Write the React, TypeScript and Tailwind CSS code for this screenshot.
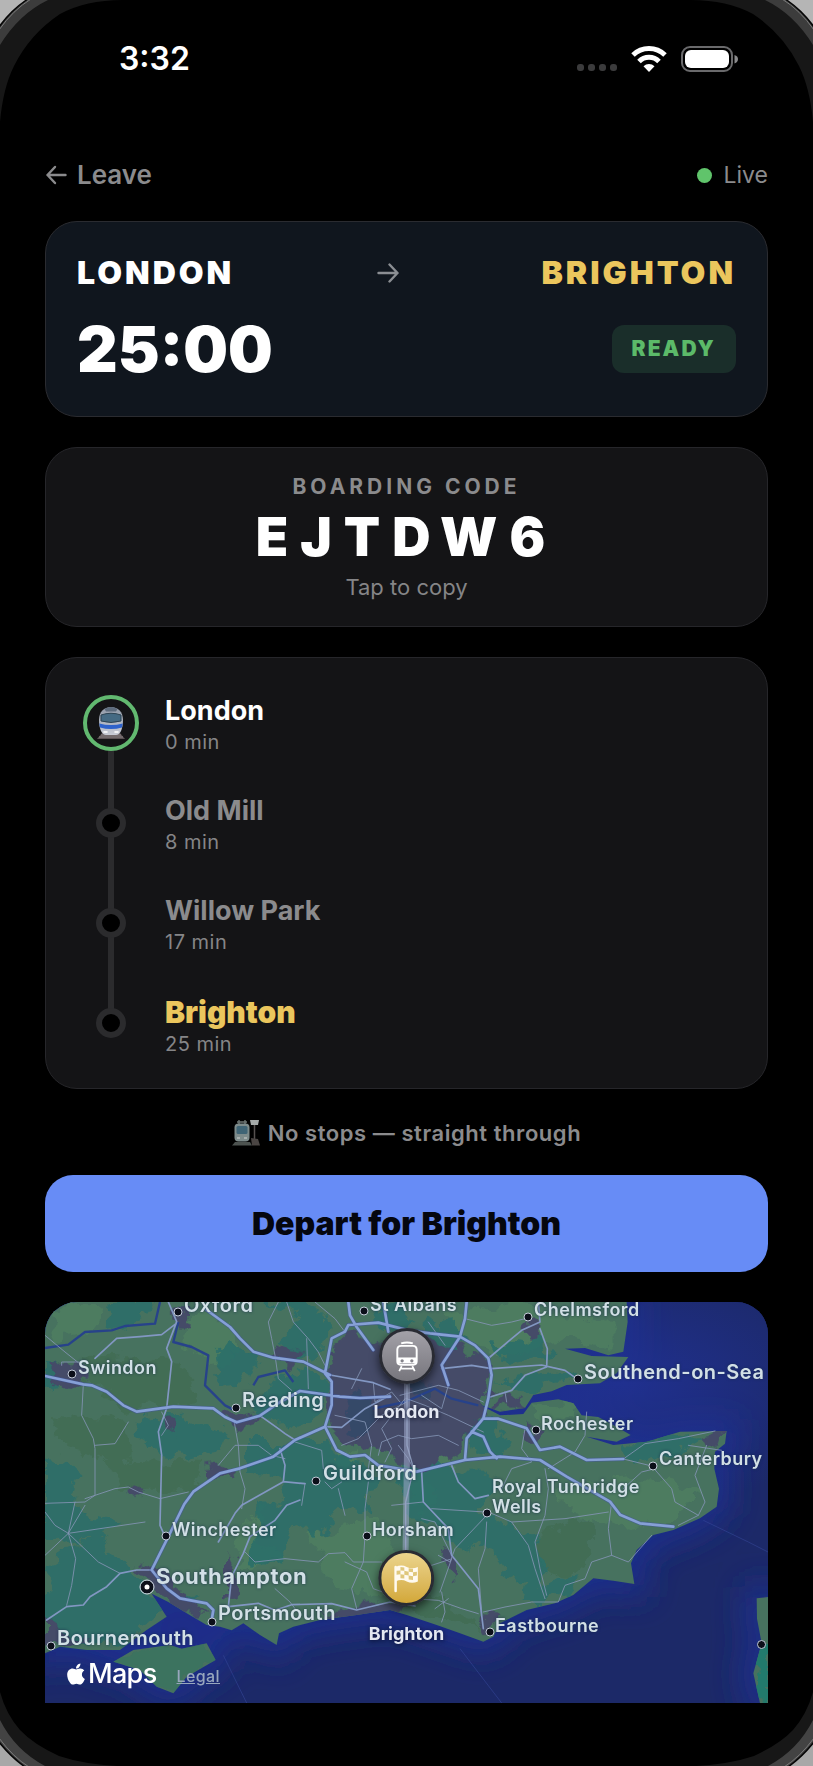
import { FaApple } from "react-icons/fa";

type Stop = { name: string; minutes: number; tone: string };

const stops: Stop[] = [
  { name: "London", minutes: 0, tone: "text-[27px] leading-8 font-bold text-white" },
  { name: "Old Mill", minutes: 8, tone: "text-[27px] leading-8 font-bold text-[#8b8b8d]" },
  { name: "Willow Park", minutes: 17, tone: "text-[27px] leading-8 font-bold text-[#8b8b8d]" },
  { name: "Brighton", minutes: 25, tone: "text-[30px] leading-[34px] font-black text-[#ebc65d]" },
];

type Place = { name: string; x: number; y: number; dot: [number, number]; style: string };

const small = "text-[18px] font-semibold tracking-wide";
const medium = "text-[20px] font-semibold tracking-wide";

/* Label and dot positions on the 723 x 401 map canvas. */
const places: Place[] = [
  { name: "Oxford", x: 139, y: 3, dot: [133, 10], style: medium },
  { name: "St Albans", x: 325, y: 3, dot: [319, 9], style: small },
  { name: "Chelmsford", x: 489, y: 8, dot: [483, 15], style: small },
  { name: "Swindon", x: 33, y: 66, dot: [27, 72], style: small },
  { name: "Southend-on-Sea", x: 539, y: 70, dot: [533, 77], style: medium },
  { name: "Reading", x: 197, y: 98, dot: [191, 106], style: medium },
  { name: "Rochester", x: 496, y: 122, dot: [491, 128], style: small },
  { name: "Canterbury", x: 614, y: 157, dot: [608, 164], style: small },
  { name: "Guildford", x: 278, y: 171, dot: [271, 179], style: medium },
  { name: "Royal Tunbridge\nWells", x: 447, y: 195, dot: [442, 211], style: small },
  { name: "Winchester", x: 127, y: 228, dot: [121, 234], style: small },
  { name: "Horsham", x: 327, y: 228, dot: [322, 234], style: small },
  { name: "Southampton", x: 111, y: 274, dot: [102, 285], style: "text-[22px] font-bold tracking-wide" },
  { name: "Portsmouth", x: 173, y: 311, dot: [167, 320], style: medium },
  { name: "Eastbourne", x: 450, y: 324, dot: [445, 330], style: small },
  { name: "Bournemouth", x: 12, y: 336, dot: [6, 344], style: medium },
];

const coast =
  "M0 0H1745L1748 60L1735 149L1690 160L1620 138L1560 140L1640 162L1750 165L1715 214L1665 244L1565 249L1520 268L1465 279L1440 318L1365 329L1300 306L1365 340L1435 336L1460 302L1540 292L1585 304L1610 340L1660 345L1705 369L1757 399L1715 419L1625 404L1705 429L1805 419L1905 389L2045 387L2040 425L2010 449L2008 500L2022 560L2015 614L1965 649L1885 684L1825 699L1775 744L1758 784L1768 846L1705 836L1645 829L1585 879L1530 904L1445 924L1365 964L1345 1004L1315 1019L1245 994L1175 969L1085 939L1035 924L935 939L825 954L745 974L702 994L695 1029L645 999L595 964L560 985L525 974L485 969L425 934L370 900L320 875L365 944L305 984L225 1044L125 1044L45 1034L0 1054Z";
const wight = "M205 1079L265 1044L375 1029L410 1040L485 1024L512 1074L425 1124L385 1174L335 1154L285 1104Z";
const france = "M2135 889L2169 885V1203H2145L2125 1114L2150 1024L2136 950Z";

const woods = [
  "M0 470L70 480L110 520L60 590L140 640L230 660L200 700L60 720L0 700Z",
  "M260 350L400 335L470 370L560 400L540 450L440 470L330 440L270 400Z",
  "M560 120L640 160L600 240L520 250L500 190Z",
  "M600 420L840 420L900 480L1000 520L980 640L880 620L820 700L760 660L700 540L600 520Z",
  "M640 0L760 40L700 120L760 170L840 150L850 70L780 0Z",
  "M620 330L720 380L830 330L860 260L780 200L680 240Z",
  "M20 770L150 700L230 760L290 830L350 920L240 1020L100 1030L0 980L0 880Z",
  "M640 600L780 590L830 640L740 700L700 790L610 780L640 700Z",
  "M1080 470L1180 480L1260 560L1200 650L1100 640L1060 580Z",
  "M1180 500L1320 500L1350 560L1290 620L1380 660L1470 700L1500 780L1470 860L1380 820L1330 740L1220 720L1160 640Z",
  "M1260 370L1340 350L1400 420L1360 470L1280 440Z",
  "M1340 120L1430 130L1480 90L1520 170L1400 190Z",
  "M1360 230L1450 220L1580 200L1560 240L1440 265Z",
  "M1730 420L1880 410L1990 400L1900 450L1800 490L1740 470Z",
  "M1140 60L1240 50L1260 130L1190 170L1130 130Z",
  "M1000 20L1060 0L1110 60L1030 90L960 60Z",
  "M400 860L470 890L420 930Z",
  "M1450 850L1600 820L1570 870L1500 900L1420 900Z",
  "M0 180L80 190L50 250L0 260Z",
  "M200 0L330 0L280 60L190 90Z",
];
const meadows = [
  "M10 20L180 10L150 90L40 110Z",
  "M430 40L560 60L600 140L520 200L420 120Z",
  "M870 460L930 440L900 520Z",
  "M560 700L660 610L640 720L720 760L600 800Z",
  "M800 690L1000 650L1060 760L1000 880L860 860Z",
  "M1190 30L1420 0L1520 40L1700 60L1700 140L1560 110L1400 160L1280 130Z",
  "M1460 300L1580 310L1590 350L1480 370Z",
  "M1140 450L1240 430L1230 500L1150 500Z",
  "M1520 560L1800 520L1960 560L1900 650L1760 680L1600 640Z",
  "M1100 520L1170 560L1160 620L1090 610Z",
];
const downs = [
  "M110 160L420 180L460 300L260 330L120 240Z",
  "M20 340L240 360L250 480L60 440Z",
  "M180 470L470 480L450 560L220 560Z",
  "M1480 680L1640 650L1640 770L1560 830L1480 790Z",
  "M1060 850L1200 900L1320 980L1200 970L1090 910Z",
];
const towns = [
  "M850 150L905 95L1010 130L1100 90L1200 130L1290 170L1330 230L1320 340L1250 410L1250 465L1120 500L1000 440L900 420L850 370L860 240Z",
  "M20 190L80 180L120 210L110 250L40 240Z",
  "M385 30L440 20L430 70L395 70Z",
  "M690 130L770 150L740 200L700 180Z",
  "M530 320L600 330L640 350L580 380L520 350Z",
  "M480 500L545 490L560 520L480 540Z",
  "M280 790L350 800L400 860L430 900L500 940L420 940L340 860Z",
  "M0 950L60 990L130 1020L0 1045Z",
  "M1430 60L1480 55L1480 95L1430 90Z",
  "M1240 130L1330 200L1340 290L1220 250Z",
  "M1440 370L1500 385L1480 410L1440 400Z",
  "M1305 930L1370 935L1330 1000Z",
  "M820 930L1000 900L1110 915L1060 935L900 950Z",
  "M1200 740L1240 770L1230 830L1190 800Z",
  "M1370 270L1440 290L1430 330L1350 320Z",
  "M540 770L580 780L575 880L540 900Z",
  "M1960 400L2045 388L2035 425L1990 440Z",
  "M250 565L280 550L290 580L260 600Z",
  "M350 340L400 360L390 390L350 370Z",
];

const rivers =
  "M0 138L70 128L120 90L200 85L240 72L330 65L345 0M400 60L385 120L440 135L490 160L480 250L540 310L570 325M625 250L640 225L720 205L745 240M985 320L1080 300L1170 260L1220 290L1300 310";

const motorways = [
  "M0 222L115 247L140 250L185 269L235 310L275 329L385 314L505 319L540 345L575 361L645 341L705 300L765 267L885 284L945 288L1035 284",
  "M485 24L555 75L585 109L625 149L685 167L775 179L855 219",
  "M840 214L860 109L900 89L910 69L1000 62L1090 85L1155 94L1245 104L1290 130L1330 169L1340 219L1330 289L1315 349L1265 409L1260 474L1115 509L1000 490L960 459L915 464L875 444L840 374L860 309L860 239Z",
  "M840 374L750 414L685 464L585 499L525 514L445 569L418 606L365 714L320 804",
  "M1265 0L1260 50L1245 104L1190 189L1210 249",
  "M910 0L915 40L935 75L985 144M1015 0L1030 89",
  "M1315 349L1360 350L1445 379L1485 444L1545 434L1625 474L1735 471",
  "M1260 474L1365 464L1485 474L1565 524L1695 599L1725 638L1785 664L1885 674",
  "M1280 389L1315 404L1335 449L1355 469",
  "M320 804L365 859L405 889L485 904L505 924L500 954",
];

const primary = [
  "M320 804L275 804L225 814L185 854L135 884L115 909L65 914L5 954",
  "M370 0L395 59L365 139L380 179L365 319L340 389L350 459L345 670L365 715",
  "M393 65L350 98L285 104L215 109L150 169",
  "M645 341L700 380L720 395L750 414M705 440L720 490L715 539L780 545M715 539L590 610L570 634L520 720",
  "M550 914L560 824L595 754L615 704L690 655L725 610L765 594",
  "M550 914L640 904L690 925L740 908L860 905L935 924L1035 900L1110 912",
  "M855 219L985 242L1035 262M840 374L890 376L960 320L1035 280",
  "M1190 200L1280 190L1340 200L1490 189L1560 205L1598 232",
  "M1335 165L1400 110L1430 85L1485 60L1480 0M1485 80L1507 140L1505 195L1440 220L1400 265L1335 285",
  "M1220 490L1240 540L1290 590L1330 580M1130 510L1135 600L1210 680L1220 760L1300 860L1315 980",
];

const lanes = [
  "M0 100L60 150L110 190M50 190L50 180L110 180M115 247L110 340L145 410L150 440L150 580L120 600L0 604M150 430L210 425L250 360",
  "M350 330L370 370L350 400M345 590L280 570L250 555L210 560L120 590M345 590L430 570M0 630L30 670L70 694L90 600M70 694L120 610M70 694L300 660M70 694L160 780L225 814M70 694L92 770L80 850L65 910M70 694L0 760",
  "M568 361L580 430L585 510L600 560L590 620M520 490L570 430L640 430L680 460L720 470",
  "M700 0L670 60L680 110L690 160L700 230L740 265M725 0L745 60L790 110L820 150L845 200M785 110L790 260M810 0L870 50L900 90",
  "M950 200L920 260M985 242L990 300L1040 270L1065 300M870 340L960 360L980 430L970 500M1000 460L1010 420L1060 400L1100 410L1180 400L1240 430",
  "M1085 300L1010 340L940 410L890 430M1080 290L1010 380L1040 440L1020 480M1085 290L1140 310L1210 340L1315 390M1065 280L1180 250L1240 265L1315 300M1130 280L1190 320L1210 250",
  "M750 420L830 445L835 500M780 545L770 610M880 560L900 640M960 700L955 780L920 860L935 920M900 780L965 810L985 860L1040 880M600 750L630 780L720 770L820 780L850 755L900 752L925 780L1010 780",
  "M970 540L960 620L960 700M1060 430L1090 470L1110 510M1135 600L1040 610M890 540L860 560L840 540",
  "M1160 620L1320 630M1325 640L1230 740L1215 780L1180 760M1220 770L1185 870M1325 660L1320 740L1300 800L1310 930M1110 780L1160 790L1215 772M1130 650L1170 660L1220 760",
  "M1400 660L1450 730L1470 800L1500 890M1330 630L1400 660L1560 650L1690 630M1500 500L1510 560L1500 640L1470 720L1485 800L1505 880",
  "M1315 930L1380 915L1460 900L1540 900L1560 850L1620 830L1640 780L1700 760L1690 680L1700 600M1700 760L1750 780L1820 700",
  "M1735 471L1800 425L1900 410L2010 387M1735 471L1820 492L1880 560L1890 600L1960 640L1900 670M1930 430L2030 445M1985 430L1950 520L1980 600L1960 640M1735 560L1790 510L1830 500",
  "M1510 500L1590 450L1620 400L1625 330M1440 380L1430 440L1460 480L1400 500L1370 560M1385 300L1380 270M1260 50L1340 70L1400 60L1440 50M1200 130L1150 60",
  "M1190 870L1200 930L1190 960M1100 890L1180 895L1250 920L1300 935M1170 920L1210 890M750 920L735 900L690 860",
];

function StatusIcons() {
  return (
    <div className="flex items-center gap-3.5">
      <span className="flex gap-1 pt-4" aria-hidden="true">
        {[0, 1, 2, 3].map((dot) => (
          <i key={dot} className="size-[7px] rounded-[3px] bg-[#3b3b3c]" />
        ))}
      </span>
      <svg viewBox="0 0 36 26" className="h-[26px] w-9" fill="none" stroke="white" role="img" aria-label="Wi-Fi">
        <path d="M2 9A23 23 0 0 1 34 9" strokeWidth="5" />
        <path d="M8 15.500A14 14 0 0 1 28 15.500" strokeWidth="5" />
        <path d="M18 26L12.500 20.300A8 8 0 0 1 23.500 20.300Z" fill="white" stroke="none" />
      </svg>
      <svg viewBox="0 0 57 26" className="h-[26px] w-[57px]" role="img" aria-label="Battery full">
        <rect x="1" y="1" width="50" height="24" rx="8" fill="none" stroke="#6a6a6c" strokeWidth="2" />
        <rect x="4" y="4" width="44" height="18" rx="6" fill="white" />
        <path d="M53.500 9Q57 10 57 13T53.500 17.500Z" fill="#8a8a8c" />
      </svg>
    </div>
  );
}

function Arrow({ className, flip = false }: { className: string; flip?: boolean }) {
  return (
    <svg viewBox="0 0 22 20" className={className} fill="none" stroke="currentColor" strokeWidth="2.400" strokeLinecap="round" strokeLinejoin="round" aria-hidden="true">
      <path d={flip ? "M20.500 10H2.500M10 2L2.500 10L10 18" : "M1.500 10H20.500M12.500 1.500L20.500 10L12.500 18.500"} />
    </svg>
  );
}

function MetroGlyph() {
  return (
    <svg viewBox="0 0 30 34" className="h-[34px] w-[30px]" aria-hidden="true">
      <defs>
        <linearGradient id="metroBody" x1="0" x2="0" y1="0" y2="1">
          <stop offset="0" stopColor="#8f98a6" />
          <stop offset="1" stopColor="#c9ccd6" />
        </linearGradient>
      </defs>
      <path d="M6 27H24L29 33H1Z" fill="#5b5254" />
      <path d="M3 31H27M5 29H25" stroke="#8d8486" strokeWidth="1" />
      <path d="M15 1C22 1 27 6 27 14C27 23 24 29 20 29H10C6 29 3 23 3 14C3 6 8 1 15 1Z" fill="url(#metroBody)" />
      <path d="M8.500 3Q15 -1 21.500 3L20 5.500H10Z" fill="#5d6b7c" />
      <path d="M5 9Q15 5.500 25 9L25 15Q15 18 5 15Z" fill="#456a83" stroke="#2d4353" strokeWidth="1" />
      <path d="M3.300 17.500Q15 20.500 26.700 17.500L26 21.500Q15 24.500 4 21.500Z" fill="#2e62cb" />
      <path d="M8 26H11M19 26H22" stroke="#fff" strokeWidth="1.600" strokeLinecap="round" />
    </svg>
  );
}

function StationGlyph() {
  return (
    <svg viewBox="0 0 28 26" className="h-[26px] w-7" aria-hidden="true">
      <path d="M3 22H18L20 25.500H0Z" fill="#4d5350" />
      <path d="M5 2H15M7 0V4M13 0V4" stroke="#6f7775" strokeWidth="1.400" />
      <rect x="2.500" y="3.500" width="15" height="18" rx="4" fill="#7d8b8b" />
      <rect x="4.500" y="6" width="11" height="8" rx="1.500" fill="#3f6475" />
      <path d="M5 18H8M12 18H15" stroke="#b5bcbb" strokeWidth="1.500" />
      <path d="M18 0H27L26 5H19Z" fill="#a5aaa9" />
      <path d="M22.500 5V20" stroke="#55504f" strokeWidth="1.500" />
      <path d="M19 18L26 19L28 25.500H20Z" fill="#4a4543" />
    </svg>
  );
}

function MapCanvas() {
  return (
    <svg viewBox="0 0 2169 1203" preserveAspectRatio="none" className="block size-full" aria-hidden="true">
      <defs>
        <clipPath id="landClip">
          <path d={coast} />
          <path d={wight} />
          <path d={france} />
        </clipPath>
        <filter id="ragged" x="-5%" y="-5%" width="110%" height="110%">
          <feTurbulence type="fractalNoise" baseFrequency="0.018" numOctaves="4" seed="7" />
          <feDisplacementMap in="SourceGraphic" scale="75" xChannelSelector="R" yChannelSelector="G" />
        </filter>
        <filter id="shore" x="-10%" y="-10%" width="120%" height="120%">
          <feGaussianBlur stdDeviation="48" />
        </filter>
        <radialGradient id="estuary" cx="0.8" cy="0.2" r="0.32">
          <stop offset="0" stopColor="#20308f" />
          <stop offset="1" stopColor="#20308f" stopOpacity="0" />
        </radialGradient>
      </defs>
      <rect width="2169" height="1203" fill="#1c2968" />
      <g fill="#1f2f8c" stroke="#1f2f8c" strokeWidth="70" filter="url(#shore)">
        <path d={coast} />
        <path d={wight} />
        <path d={france} />
      </g>
      <rect width="2169" height="1203" fill="url(#estuary)" />
      <g fill="#47725f">
        <path d={coast} />
        <path d={wight} />
        <path d={france} />
      </g>
      <g clipPath="url(#landClip)">
        <g filter="url(#ragged)">
          <path d={meadows.join("")} fill="#4d7c60" />
          <path d={downs.join("")} fill="#436d55" />
          <path d={woods.join("")} fill="#2b6f69" opacity="0.9" />
          <path d={wight} fill="#33735f" opacity="0.5" />
          <path d="M2130 1040H2169V1203H2120Z" fill="#237a6c" />
          <path d={towns.join("")} fill="#444b68" />
          <path d="M940 250L990 340L940 420L890 370ZM1100 215L1170 240L1140 290L1080 260Z" fill="#2e4a68" opacity="0.7" />
        </g>
        <path d={rivers} fill="none" stroke="#27428a" strokeWidth="7" strokeLinejoin="round" />
      </g>
      <g fill="none" stroke="#3a4ba0" strokeWidth="3" opacity="0.5">
        <path d="M535 1060L605 1203M1245 1040L1370 1203M1975 655L2110 720L2169 750" />
      </g>
      <g fill="none" strokeLinejoin="round" strokeLinecap="round">
        <path d={lanes.join("")} stroke="#8494b4" strokeWidth="3" opacity="0.85" />
        <path d={primary.join("")} stroke="#8297c2" strokeWidth="5" />
        <path d={motorways.join("")} stroke="#42579c" strokeWidth="12" opacity="0.6" />
        <path d={motorways.join("")} stroke="#86a0d6" strokeWidth="8" />
        <path d="M1086 250V430L1106 500L1082 600V790" stroke="#8796b6" strokeWidth="4" />
        <path d="M1086 200V450L1081 800" stroke="#9fa9cb" strokeWidth="18" opacity="0.55" />
      </g>
    </svg>
  );
}

function Pin({ label, spot, face, children }: { label: string; spot: string; face: string; children: React.ReactNode }) {
  return (
    <div className={`absolute flex -translate-x-1/2 flex-col items-center gap-4 ${spot}`}>
      <span className={`flex size-14 items-center justify-center rounded-full border-[3px] border-[#292b33] shadow-[0_4px_10px_rgba(0,0,0,0.6)] ${face}`}>
        {children}
      </span>
      <span className="text-[18px] leading-6 font-bold text-[#e4e8f2] [text-shadow:0_1px_4px_rgba(10,15,40,0.9)]">{label}</span>
    </div>
  );
}

function RouteMap() {
  return (
    <section aria-label="Route map" className="relative h-[401px] overflow-hidden rounded-t-[32px] bg-[#1c2a6c]">
      <MapCanvas />
      {places.map((place) => (
        <div key={place.name}>
          <i
            className={`absolute -translate-x-1/2 -translate-y-1/2 rounded-full ${place.name === "Southampton" ? "size-[13px] border-4 border-[#0c0f1a] bg-white outline outline-[#d5dbe8]" : "size-[9px] border border-[#c3cbd8] bg-[#0c0f1a]"}`}
            style={{ left: `${(place.dot[0] / 723) * 100}%`, top: place.dot[1] }}
          />
          <span
            className={`absolute -translate-y-1/2 leading-5 whitespace-pre text-[#d2e0e6] [text-shadow:0_0_3px_rgba(25,45,75,0.9)] ${place.style}`}
            style={{ left: `${(place.x / 723) * 100}%`, top: place.y }}
          >
            {place.name}
          </span>
        </div>
      ))}
      <i className="absolute right-[2px] bottom-[54px] size-[9px] rounded-full border border-[#c3cbd8] bg-[#0c0f1a]" />
      <Pin label="London" spot="left-1/2 top-[26px]" face="bg-linear-to-b from-[#a3a1a8] to-[#77767d]">
        <svg viewBox="0 0 24 32" className="h-[31px] w-6" fill="none" stroke="white" strokeWidth="2" aria-hidden="true">
          <path d="M6 2.500Q12 0.500 18 2.500M6 5H18Q22 5 22 9V21Q22 24.500 18.500 24.500H5.500Q2 24.500 2 21V9Q2 5 6 5Z" />
          <path d="M2.500 17H21.500V23H2.500Z" fill="white" stroke="none" />
          <circle cx="7" cy="20.500" r="1.700" fill="#85848b" stroke="none" />
          <circle cx="17" cy="20.500" r="1.700" fill="#85848b" stroke="none" />
          <path d="M6.500 26L4 31M17.500 26L20 31M5.500 28.500H18.500" strokeWidth="1.800" />
        </svg>
      </Pin>
      <Pin label="Brighton" spot="left-1/2 top-[248px]" face="bg-linear-to-b from-[#ebd48c] to-[#d3a838]">
        <svg viewBox="0 0 28 30" className="h-[29px] w-7" aria-hidden="true">
          <path d="M3 3V28" stroke="#fffaf0" strokeWidth="2.600" strokeLinecap="round" />
          <path d="M3 3Q9 0 14.500 3T26 3V18Q20 21 14.500 18T3 18Z" fill="#fffaf0" />
          <path d="M8 3L12 3.500V7L8 6.800ZM16.500 4.500L21 5V8.500L16.500 8ZM4 7L8 6.800V10.500L4 11ZM12 7L16.500 8V12L12 11ZM21 8.500L25 8V12L21 12.700ZM8 10.500L12 11V15L8 14.800ZM16.500 12L21 12.700V16.500L16.500 16Z" fill="#dfc77c" />
        </svg>
      </Pin>
      <div className="absolute bottom-[13px] left-[19px] flex items-center text-white">
        <FaApple className="size-6" aria-hidden="true" />
        <span className="text-[27px] leading-8 font-medium tracking-tight">Maps</span>
        <a href="#legal" className="pt-1 pl-5 text-[16px] leading-5 font-medium tracking-wide text-[#98a6bd] underline">Legal</a>
      </div>
    </section>
  );
}

function Bezel() {
  return (
    <div className="pointer-events-none absolute inset-0 overflow-hidden" aria-hidden="true">
      {["top-0 left-0", "top-0 right-0 -scale-x-100"].map((corner) => (
        <svg key={corner} viewBox="0 0 125 125" className={`absolute size-[125px] ${corner}`}>
          <path d="M0 0H122Q86 0 60 14Q30 34 14 66Q3 88 0 122Z" fill="#171717" />
          <path d="M0 0H48Q19 14 0 45Z" fill="#3c3c3c" />
          <path d="M0 0H28Q11 10 0 26Z" fill="#b5b5b5" />
          <path d="M28 -1Q11 10 -1 27" fill="none" stroke="#050505" strokeWidth="1.500" />
          <path d="M31 -1Q13 10 -1 30" fill="none" stroke="#7a7a7a" strokeWidth="1" />
        </svg>
      ))}
      {["bottom-0 left-0 -scale-x-100", "bottom-0 right-0"].map((corner) => (
        <svg key={corner} viewBox="0 0 125 80" className={`absolute h-20 w-[125px] ${corner}`}>
          <path d="M125 80H8Q42 78 66 70Q92 58 105 44Q119 28 125 6Z" fill="#171717" />
          <path d="M125 80H80Q110 64 125 34Z" fill="#434343" />
          <path d="M125 80H101Q114 71 125 57Z" fill="#a8a8a8" />
          <path d="M100 81Q114 71 126 56" fill="none" stroke="#050505" strokeWidth="1.500" />
          <path d="M96 81Q112 71 126 52" fill="none" stroke="#7a7a7a" strokeWidth="1" />
        </svg>
      ))}
    </div>
  );
}

export default function App() {
  return (
    <div className="relative min-h-screen bg-black pb-[63px] font-['Inter','Liberation_Sans',sans-serif] text-white">
      <Bezel />
      <div className="flex items-center justify-between pt-[39px] pr-[75px] pl-[119px]">
        <time className="text-[32px] leading-10 font-semibold">3:32</time>
        <StatusIcons />
      </div>

      <main className="px-[45px] pt-[78px]">
        <header className="flex items-center justify-between text-[#8b8b8d]">
          <button type="button" className="flex items-center gap-2.5 text-[26px] leading-9 font-semibold">
            <Arrow flip className="h-5 w-[22px]" />
            Leave
          </button>
          <p className="flex items-center gap-3 text-[23px] leading-9">
            <span className="size-[15px] rounded-full bg-[#60c46b]" />
            Live
          </p>
        </header>

        <div className="flex flex-col gap-[30px] pt-7">
          <section className="flex flex-col gap-5 rounded-[32px] border border-[#2a2b30] bg-[#10161e] px-[31px] pt-[31px] pb-[31px]">
            <div className="flex items-center justify-between text-[32px] leading-10 font-black tracking-[3px]">
              <h1>LONDON</h1>
              <Arrow className="h-5 w-[22px] text-[#8b8e93]" />
              <p className="text-[#ebc65d]">BRIGHTON</p>
            </div>
            <div className="flex items-center justify-between">
              <p className="text-[63px] leading-[72px] font-black">25:00</p>
              <p className="rounded-xl bg-[#1a2e2a] px-5 py-2 text-[21px] leading-8 font-black tracking-widest text-[#5cba69]">READY</p>
            </div>
          </section>

          <button type="button" className="flex flex-col items-center rounded-[32px] border border-[#26262a] bg-[#141416] pt-[27px] pb-[25px]">
            <span className="text-[21px] leading-6 font-bold tracking-[4px] text-[#8b8b8d]">BOARDING CODE</span>
            <span className="pt-1.5 text-[53px] leading-[64px] font-black tracking-[12px]">EJTDW6</span>
            <span className="pt-1 text-[22px] leading-7 text-[#858587]">Tap to copy</span>
          </button>

          <ol className="rounded-[32px] border border-[#26262a] bg-[#141416] px-[37px] pt-[37px] pb-[34px]">
            {stops.map((stop, index) => (
              <li key={stop.name} className="relative flex h-[100px] gap-[26px] last:h-[59px]">
                {index < stops.length - 1 && <span className="absolute top-7 left-[25px] h-full w-1.5 bg-[#2b2b2d]" />}
                <span className="relative z-10 flex size-14 items-center justify-center">
                  {index === 0 ? (
                    <span className="flex size-14 items-center justify-center rounded-full border-4 border-[#62b970] bg-[#141416]">
                      <MetroGlyph />
                    </span>
                  ) : (
                    <span className="size-[30px] rounded-full border-[6px] border-[#2b2b2d] bg-black" />
                  )}
                </span>
                <div>
                  <h2 className={stop.tone}>{stop.name}</h2>
                  <p className="pt-[3px] text-[20px] leading-6 tracking-wide text-[#858587]">{stop.minutes} min</p>
                </div>
              </li>
            ))}
          </ol>
        </div>

        <p className="flex items-center justify-center gap-2 pt-7 pb-[26px] text-[22px] leading-8 font-semibold tracking-wide text-[#8b8b8d]">
          <StationGlyph />
          No stops — straight through
        </p>

        <button type="button" className="mb-[30px] w-full rounded-[28px] bg-[#678cf6] py-7 text-[32px] leading-[41px] font-black text-[#05070f]">
          Depart for Brighton
        </button>

        <RouteMap />
      </main>
    </div>
  );
}
